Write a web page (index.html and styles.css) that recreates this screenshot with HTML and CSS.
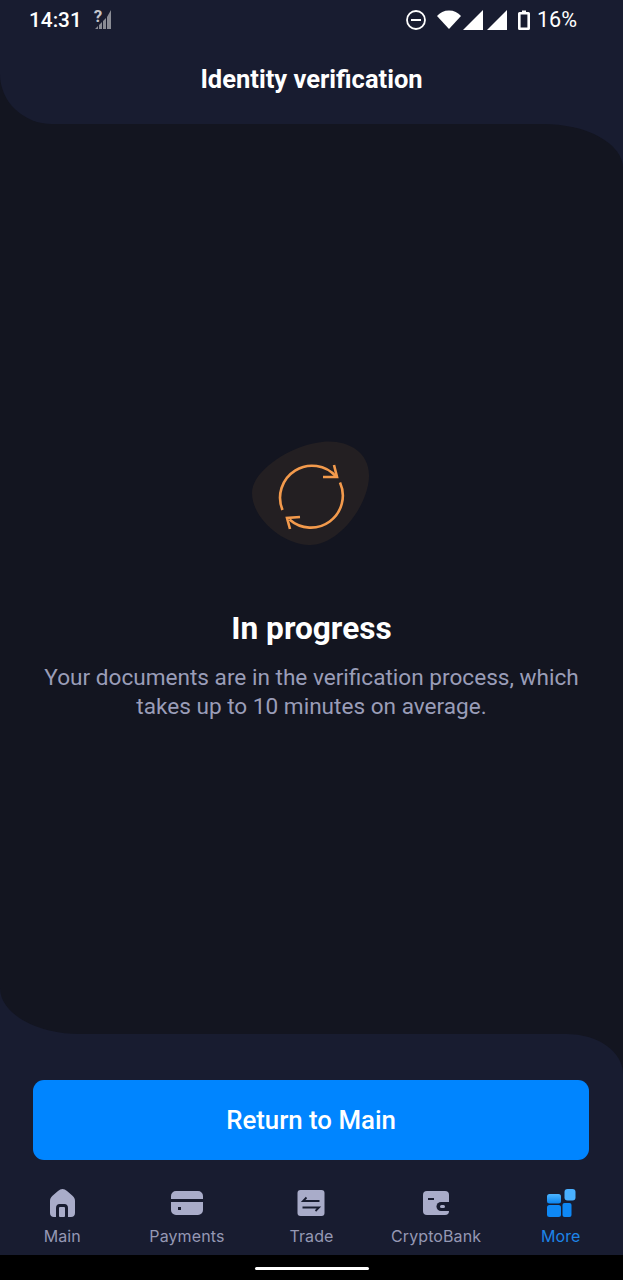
FILE: index.html
```html
<!DOCTYPE html>
<html lang="en">
<head>
    <meta charset="UTF-8">
    <meta name="viewport" content="width=device-width, initial-scale=1.0">
    <link rel="stylesheet" href="styles.css">
    <title>Identity verification</title>
</head>
<body>
    <div class="top">
        <header class="header">
            <div class="status">
                <div class="status-left">
                    <span class="time">14:31</span>
                    <span class="nosim">?</span>
                    <svg class="bars" width="16" height="19" viewBox="0 0 16 19">
                        <path d="M0 19 L3 16 V19Z M4 19 V15 L7 12 V19Z M8 19 V11 L11 8 V19Z M12 19 V7 L16 0 V19Z" fill="#8a8c95"/>
                    </svg>
                </div>
                <div class="status-right">
                    <svg width="20" height="20" viewBox="0 0 20 20">
                        <circle cx="10" cy="10" r="9" fill="none" stroke="#fff" stroke-width="1.8"/>
                        <rect x="5" y="9" width="10" height="2" fill="#fff"/>
                    </svg>
                    <svg class="wifi" width="24" height="19" viewBox="0 0 24 19">
                        <path d="M0 6 C3 2.500 7 0.500 12 0.500 C17 0.500 21 2.500 24 6 L12 19Z" fill="#fff"/>
                    </svg>
                    <svg class="cell" width="20" height="20" viewBox="0 0 20 20">
                        <path d="M0 20 L20 0 V20Z" fill="#fff"/>
                    </svg>
                    <svg class="cell" width="20" height="20" viewBox="0 0 20 20">
                        <path d="M0 20 L20 0 V20Z" fill="#fff"/>
                    </svg>
                    <svg class="batt" width="12" height="20" viewBox="0 0 12 20">
                        <path d="M4 0.500 H8 V2 H10.500 A1.500 1.500 0 0 1 12 3.500 V18.500 A1.500 1.500 0 0 1 10.500 20 H1.500 A1.500 1.500 0 0 1 0 18.500 V3.500 A1.500 1.500 0 0 1 1.500 2 H4Z M2.600 4.500 V17.500 H9.400 V4.500Z" fill="#fff" fill-rule="evenodd"/>
                    </svg>
                    <span class="percent">16%</span>
                </div>
            </div>
            <h1>Identity verification</h1>
        </header>
    </div>

    <main class="main">
        <svg class="progress" width="160" height="130" viewBox="0 0 160 130">
            <path d="M90 12 C112 9 138 20 137 47 C136 76 106 116 77 115 C50 114 20 88 20 63 C20 40 60 15 90 12Z" fill="#231f22"/>
            <g fill="none" stroke="#f39a4c" stroke-width="2.6">
                <path d="M50.500 80 A32 32 0 0 1 104 46.500"/>
                <path d="M108 52.500 A32 32 0 0 1 57.500 89.500"/>
                <path d="M102 35 L105 47 L91 47"/>
                <path d="M68 87 L55 88 L58 99"/>
            </g>
        </svg>
        <h2>In progress</h2>
        <p>Your documents are in the verification process, which takes up to 10 minutes on average.</p>
    </main>

    <div class="bottom">
        <div class="panel">
            <button class="return">Return to Main</button>
            <nav class="tabs">
                <div class="tab">
                    <svg width="30" height="30" viewBox="0 0 30 30">
                        <path d="M15.500 1 C17 1 18.500 1.800 20 3 L25.500 7.800 C27.300 9.300 28 11 28 13 V25 C28 27.500 26.500 29 24 29 H21 V20 C21 17.500 19.500 16 17.500 16 H12.500 C10.500 16 9 17.500 9 20 V29 H7 C4.500 29 3 27.500 3 25 V13 C3 11 3.700 9.300 5.500 7.800 L11 3 C12.500 1.800 14 1 15.500 1Z" fill="#a9acc9"/>
                        <rect x="12" y="19" width="6" height="10" rx="1" fill="#a9acc9"/>
                    </svg>
                    <span>Main</span>
                </div>
                <div class="tab">
                    <svg width="32" height="30" viewBox="0 0 32 30">
                        <path d="M5 3 H27 A5 5 0 0 1 32 8 V11 H0 V8 A5 5 0 0 1 5 3Z M0 14 H32 V22 A5 5 0 0 1 27 27 H5 A5 5 0 0 1 0 22Z" fill="#a9acc9"/>
                        <rect x="7" y="19" width="3" height="3" fill="#181c30"/>
                    </svg>
                    <span>Payments</span>
                </div>
                <div class="tab">
                    <svg width="30" height="30" viewBox="0 0 30 30">
                        <rect x="1.500" y="2" width="27" height="26" rx="3" fill="#a9acc9"/>
                        <path d="M23.500 13 H7 L10.500 9.500 M6.500 19.500 H23 L19.500 23" fill="none" stroke="#181c30" stroke-width="1.800"/>
                    </svg>
                    <span>Trade</span>
                </div>
                <div class="tab">
                    <svg width="30" height="30" viewBox="0 0 30 30">
                        <path d="M6 3 H24 A4 4 0 0 1 28 7 V23 A4 4 0 0 1 24 27 H6 A4 4 0 0 1 2 23 V7 A4 4 0 0 1 6 3Z" fill="#a9acc9"/>
                        <rect x="7" y="10" width="6" height="2" fill="#181c30"/>
                        <path d="M20 14 H28 V23 H20 A4.500 4.500 0 0 1 20 14Z" fill="#181c30"/>
                        <rect x="19" y="17" width="5" height="3" rx="1.500" fill="#a9acc9"/>
                    </svg>
                    <span>CryptoBank</span>
                </div>
                <div class="tab active">
                    <svg width="30" height="30" viewBox="0 0 30 30">
                        <defs>
                            <linearGradient id="more" x1="0" y1="0" x2="0" y2="1">
                                <stop offset="0" stop-color="#4db5ff"/>
                                <stop offset="1" stop-color="#0a84f0"/>
                            </linearGradient>
                        </defs>
                        <rect x="1" y="6" width="14" height="9.500" rx="2.500" fill="url(#more)"/>
                        <rect x="1" y="17" width="14" height="12" rx="2.500" fill="#0e88f5"/>
                        <rect x="16.500" y="15" width="9" height="14" rx="2" fill="#0e88f5"/>
                        <rect x="18.500" y="1" width="11" height="11.500" rx="3" fill="#49b0ff"/>
                    </svg>
                    <span>More</span>
                </div>
            </nav>
        </div>
    </div>

    <div class="navbar">
        <div class="pill"></div>
    </div>
</body>
</html>
```

FILE: styles.css
```css
*{
    margin:0;
    box-sizing:border-box;
    font-family:Roboto, sans-serif;
}
body{
    width:623px;
    height:1280px;
    overflow:hidden;
    display:flex;
    flex-direction:column;
    background:#181c30;
}
.top{
    background:#131520;
}
.header{
    height:124px;
    background:#181c30;
    border-bottom-left-radius:52px 50px;
    padding:0 46px 0 29px;
    color:white;
}
.status{
    height:38px;
    padding-top:1px;
    display:flex;
    justify-content:space-between;
    align-items:center;
}
.status-left{
    display:flex;
    align-items:center;
}
.time{
    font-size:20.8px;
    font-weight:500;
}
.nosim{
    font-size:17px;
    font-weight:700;
    color:#c4c5cb;
    margin:-7px 0 0 12px;
}
.bars{
    margin-left:-7px;
}
.status-right{
    display:flex;
    align-items:center;
}
.wifi{
    margin-left:11px;
}
.cell{
    margin-left:2px;
}
.cell + .cell{
    margin-left:4px;
}
.batt{
    margin-left:11px;
}
.percent{
    font-size:21.6px;
    margin-left:7px;
}
h1{
    margin-top:23px;
    margin-left:-29px;
    margin-right:-46px;
    font-size:25.5px;
    line-height:36px;
    font-weight:700;
    text-align:center;
}
.main{
    height:910px;
    background:#131520;
    border-top-right-radius:80px 44px;
    border-bottom-left-radius:80px 46px;
    display:flex;
    flex-direction:column;
    align-items:center;
    padding-top:306px;
}
.progress{
    display:block;
}
h2{
    margin-top:49px;
    font-size:31.6px;
    line-height:40px;
    font-weight:700;
    color:white;
}
.main p{
    margin-top:14px;
    width:560px;
    font-size:22.6px;
    line-height:29px;
    text-align:center;
    color:#9a9db8;
}
.bottom{
    background:#131520;
}
.panel{
    height:221px;
    background:#181c30;
    border-top-right-radius:56px 40px;
    padding-top:46px;
}
.return{
    display:block;
    width:556px;
    height:80px;
    margin-left:33px;
    background:#0085ff;
    color:white;
    font-size:25.8px;
    font-weight:500;
    border:none;
    border-radius:11px;
}
.tabs{
    display:flex;
    margin-top:28px;
}
.tab{
    flex:1;
    display:flex;
    flex-direction:column;
    align-items:center;
    color:#9598b4;
}
.tab svg{
    display:block;
}
.tab span{
    margin-top:8px;
    font-family:Inter, sans-serif;
    font-size:16px;
    line-height:20px;
    letter-spacing:0.1px;
}
.tab.active{
    color:#1d84e8;
}
.navbar{
    height:25px;
    background:black;
    display:flex;
    justify-content:center;
    padding-top:12px;
}
.pill{
    width:114px;
    height:3px;
    background:white;
    border-radius:2px;
}
```
